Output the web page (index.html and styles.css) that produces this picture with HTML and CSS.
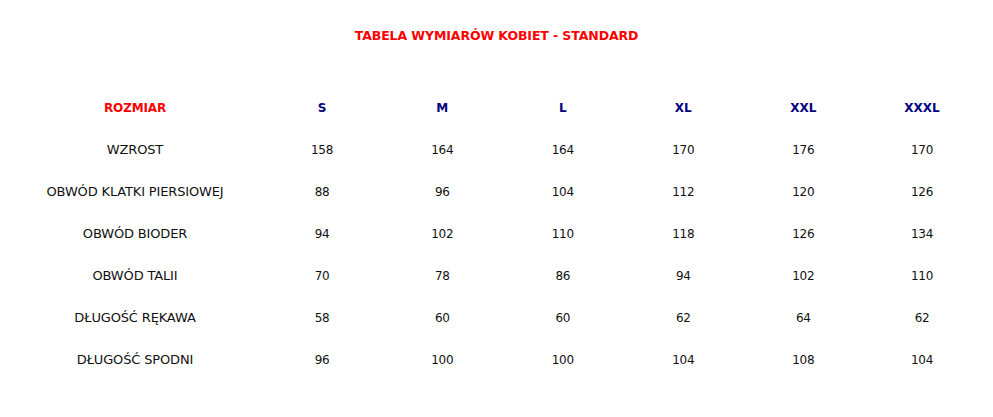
FILE: index.html
```html
<!DOCTYPE html>
<html lang="pl">
<head>
<meta charset="utf-8">
<title>Tabela wymiarów kobiet</title>
<link rel="stylesheet" href="styles.css">
</head>
<body>
<h1 class="title">TABELA WYMIARÓW KOBIET - STANDARD</h1>
<div class="table">
  <div class="row head">
    <div class="cell label red">ROZMIAR</div>
    <div class="cell size">S</div>
    <div class="cell size">M</div>
    <div class="cell size">L</div>
    <div class="cell size">XL</div>
    <div class="cell size">XXL</div>
    <div class="cell size">XXXL</div>
  </div>
  <div class="row">
    <div class="cell label">WZROST</div>
    <div class="cell num">158</div><div class="cell num">164</div><div class="cell num">164</div><div class="cell num">170</div><div class="cell num">176</div><div class="cell num">170</div>
  </div>
  <div class="row">
    <div class="cell label">OBWÓD KLATKI PIERSIOWEJ</div>
    <div class="cell num">88</div><div class="cell num">96</div><div class="cell num">104</div><div class="cell num">112</div><div class="cell num">120</div><div class="cell num">126</div>
  </div>
  <div class="row">
    <div class="cell label">OBWÓD BIODER</div>
    <div class="cell num">94</div><div class="cell num">102</div><div class="cell num">110</div><div class="cell num">118</div><div class="cell num">126</div><div class="cell num">134</div>
  </div>
  <div class="row">
    <div class="cell label">OBWÓD TALII</div>
    <div class="cell num">70</div><div class="cell num">78</div><div class="cell num">86</div><div class="cell num">94</div><div class="cell num">102</div><div class="cell num">110</div>
  </div>
  <div class="row">
    <div class="cell label">DŁUGOŚĆ RĘKAWA</div>
    <div class="cell num">58</div><div class="cell num">60</div><div class="cell num">60</div><div class="cell num">62</div><div class="cell num">64</div><div class="cell num">62</div>
  </div>
  <div class="row">
    <div class="cell label">DŁUGOŚĆ SPODNI</div>
    <div class="cell num">96</div><div class="cell num">100</div><div class="cell num">100</div><div class="cell num">104</div><div class="cell num">108</div><div class="cell num">104</div>
  </div>
</div>
</body>
</html>
```
FILE: styles.css
```css
html, body {
  margin: 0;
  padding: 0;
  background: #ffffff;
}
body {
  padding: 0 8px;
  font-family: "DejaVu Sans", Verdana, sans-serif;
  font-size: 13px;
  color: #111111;
}
.title {
  margin: 0;
  padding-top: 28px;
  height: 16px;
  line-height: 16px;
  text-align: center;
  font-size: 12.5px;
  font-weight: bold;
  color: #ff0000;
  letter-spacing: -0.1px;
}
.table {
  margin-top: 43px;
  display: flex;
  flex-direction: column;
}
.row {
  display: grid;
  grid-template-columns: 254px 120px 120.5px 120.5px 120.5px 119.5px 118px;
  height: 42px;
  align-items: center;
}
.cell {
  text-align: center;
  line-height: 16px;
}
.label {
  letter-spacing: -0.15px;
}
.red {
  color: #ff0000;
  font-weight: bold;
  font-size: 12px;
}
.size {
  color: #000080;
  font-weight: bold;
  font-size: 12px;
}
.num {
  font-size: 12px;
  letter-spacing: -0.3px;
}
```
